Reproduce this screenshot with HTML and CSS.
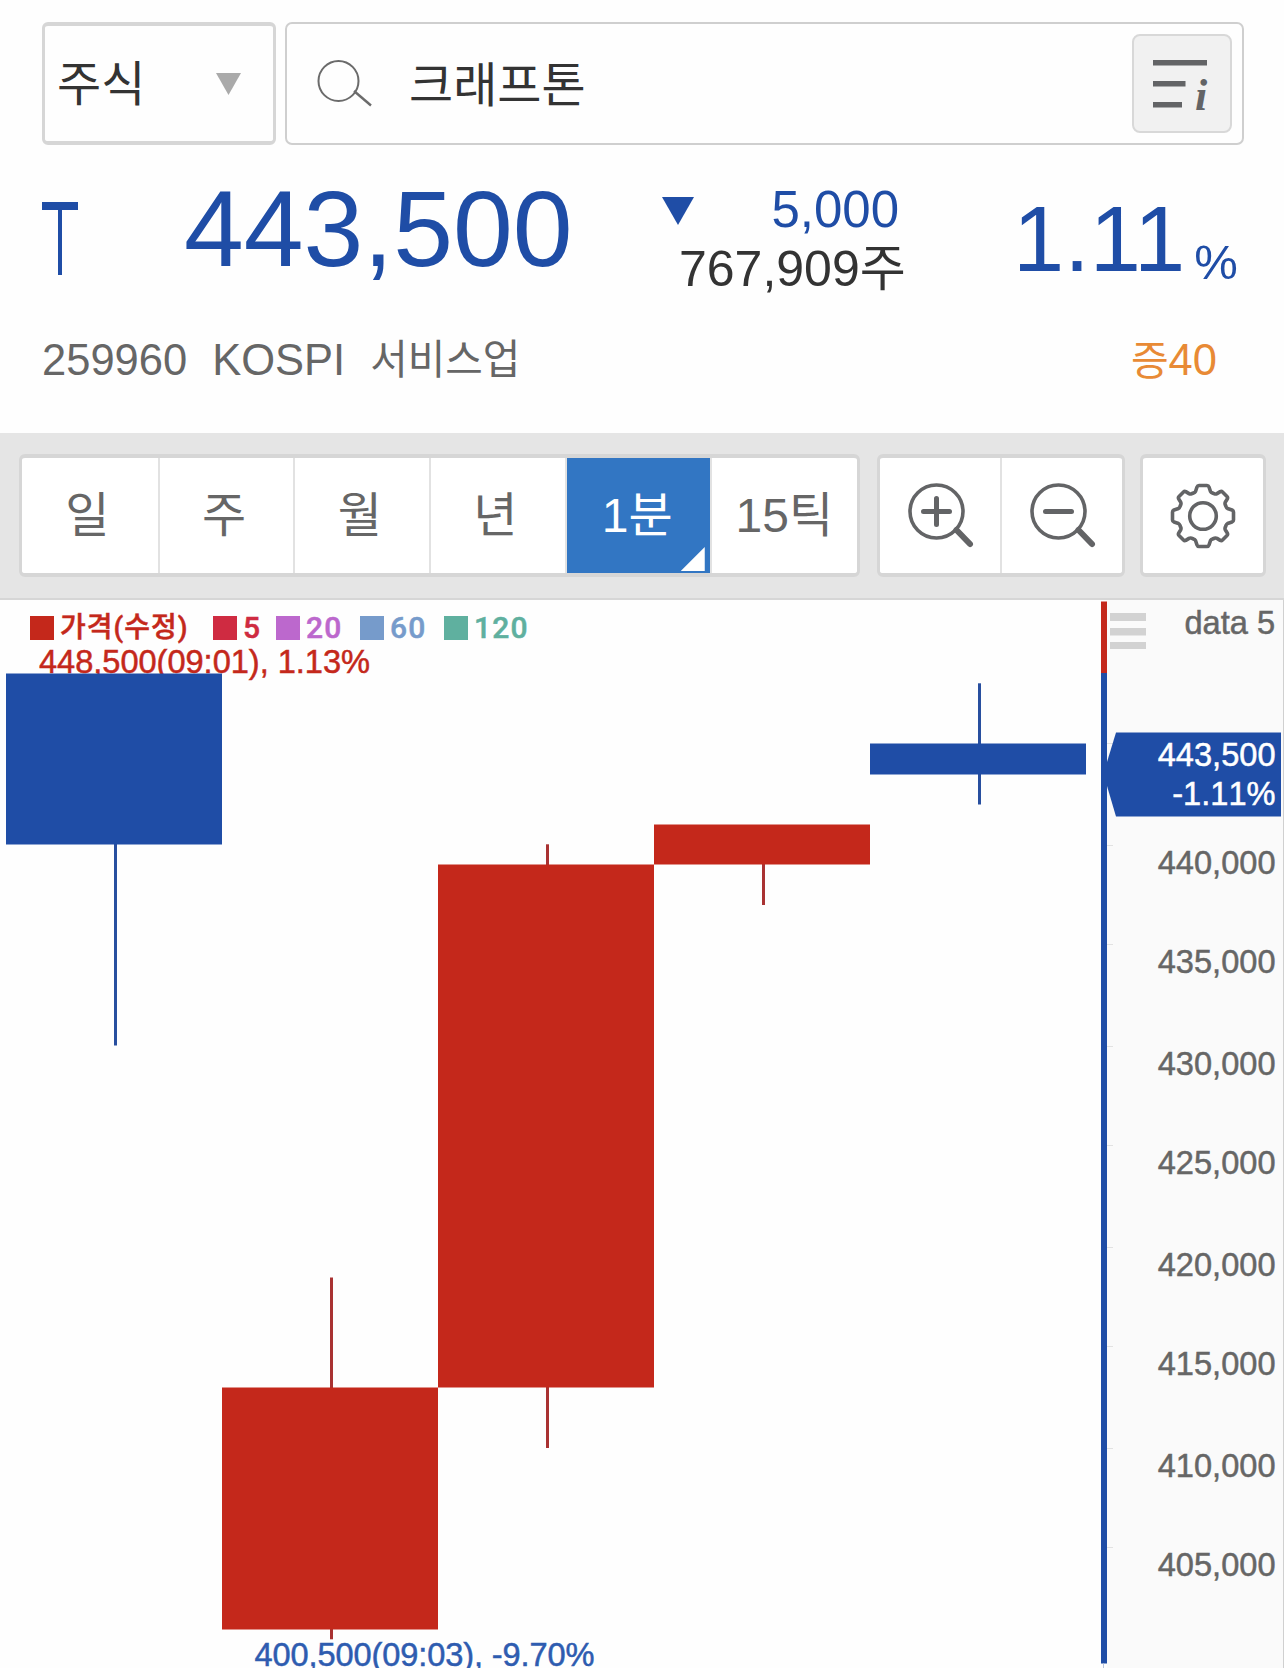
FILE: index.html
```html
<!DOCTYPE html>
<html lang="ko">
<head>
<meta charset="utf-8">
<title>크래프톤 443,500</title>
<link rel="stylesheet" href="styles.css">
</head>
<body>
<header class="header">
  <div class="search-row">
    <div class="select"><span>주식</span><svg width="25" height="22" viewBox="0 0 25 22"><path d="M0 0H25L12.5 22Z" fill="#aaa"/></svg></div>
    <div class="search">
      <svg class="search-icon" width="56" height="48" viewBox="0 0 56 48" fill="none" stroke="#6b6b6b" stroke-width="2"><circle cx="21.500" cy="21" r="20"/><path d="M37 31L54 45.500" stroke-width="2.400"/></svg>
      <span class="search-text">크래프톤</span>
      <div class="info-btn">
        <svg width="56" height="52" viewBox="0 0 56 52"><path d="M0 1H54V6.500H0ZM0 22H32.500V27.500H0ZM0 43H29V48.500H0Z" fill="#636466"/></svg>
        <span class="info-i">i</span>
      </div>
    </div>
  </div>
  <div class="quote">
    <svg class="limit" width="36" height="73" viewBox="0 0 36 73"><path d="M0 0H36V8H20V73H16V8H0Z" fill="#1f4da6"/></svg>
    <span class="price">443,500</span>
    <div class="change">
      <div class="diff"><svg width="32" height="28" viewBox="0 0 32 28"><path d="M0 0H32L16 28Z" fill="#1f4da6"/></svg><span>5,000</span></div>
      <div class="volume">767,909주</div>
    </div>
    <div class="rate"><span>1.11</span><span class="percent">%</span></div>
  </div>
  <div class="meta">
    <span class="code">259960</span><span class="market">KOSPI</span><span class="sector">서비스업</span><span class="margin"><span class="margin-label">증</span>40</span>
  </div>
</header>

<nav class="toolbar">
  <div class="group periods">
    <span class="cell">일</span><span class="cell">주</span><span class="cell">월</span><span class="cell">년</span><span class="cell active">1분<i class="corner"></i></span><span class="cell">15틱</span>
  </div>
  <div class="group zooms">
    <span class="cell"><svg width="70" height="70" viewBox="0 0 70 70" fill="none" stroke="#636466"><circle cx="29.500" cy="29.500" r="26.500" stroke-width="3.600"/><path d="M29.500 16.500V42.500M16.500 29.500H42.500" stroke-width="5" stroke-linecap="round"/><path d="M49.500 48L63 62" stroke-width="6" stroke-linecap="round"/></svg></span>
    <span class="cell"><svg width="70" height="70" viewBox="0 0 70 70" fill="none" stroke="#636466"><circle cx="29.500" cy="29.500" r="26.500" stroke-width="3.600"/><path d="M16.500 29.500H42.500" stroke-width="5" stroke-linecap="round"/><path d="M49.500 48L63 62" stroke-width="6" stroke-linecap="round"/></svg></span>
  </div>
  <div class="group settings">
    <span class="cell"><svg width="68" height="68" viewBox="-34 -34 68 68" fill="none" stroke="#636466" stroke-width="3.600" stroke-linejoin="round"><circle r="13.300"/><path d="M-4 -30.500H4Q5.500 -30.500 6 -29L7.500 -24.500Q8 -23.500 9.500 -23L11.500 -22.200Q12.800 -21.700 14 -22.400L17.200 -24.400Q18.500 -25 19.500 -24L24 -19.500Q25 -18.500 24.400 -17.200L22.400 -14Q21.700 -12.800 22.200 -11.500L23 -9.500Q23.500 -8 24.500 -7.500L29 -6Q30.500 -5.500 30.500 -4V4Q30.500 5.500 29 6L24.500 7.500Q23.500 8 23 9.500L22.200 11.500Q21.700 12.800 22.400 14L24.400 17.200Q25 18.500 24 19.500L19.500 24Q18.500 25 17.200 24.400L14 22.400Q12.800 21.700 11.500 22.200L9.500 23Q8 23.500 7.500 24.500L6 29Q5.500 30.500 4 30.500H-4Q-5.500 30.500 -6 29L-7.500 24.500Q-8 23.500 -9.500 23L-11.500 22.200Q-12.800 21.700 -14 22.400L-17.200 24.400Q-18.500 25 -19.500 24L-24 19.500Q-25 18.500 -24.400 17.200L-22.400 14Q-21.700 12.800 -22.200 11.500L-23 9.500Q-23.500 8 -24.500 7.500L-29 6Q-30.500 5.500 -30.500 4V-4Q-30.500 -5.500 -29 -6L-24.500 -7.500Q-23.500 -8 -23 -9.500L-22.200 -11.500Q-21.700 -12.800 -22.400 -14L-24.400 -17.200Q-25 -18.500 -24 -19.500L-19.500 -24Q-18.500 -25 -17.200 -24.400L-14 -22.400Q-12.800 -21.700 -11.500 -22.200L-9.500 -23Q-8 -23.500 -7.500 -24.500L-6 -29Q-5.500 -30.500 -4 -30.500Z"/></svg></span>
  </div>
</nav>

<main class="chart">
  <svg class="plot" width="1107" height="1068" viewBox="0 600 1107 1068">
    <text class="note down-note" x="39" y="673" textLength="331">448,500(09:01), 1.13%</text>
    <text class="note low-note" x="254.500" y="1666" textLength="340">400,500(09:03), -9.70%</text>
    <g fill="#284f9f">
      <rect x="114" y="844" width="3" height="201.500"/>
      <rect x="978" y="683.300" width="3" height="121.200"/>
    </g>
    <g fill="#a93232">
      <rect x="330" y="1277.500" width="3" height="361.800"/>
      <rect x="546" y="844.300" width="3" height="603.700"/>
      <rect x="762" y="864" width="3" height="41"/>
    </g>
    <g fill="#1f4da6">
      <rect x="6" y="673.500" width="216" height="171"/>
      <rect x="870" y="743.500" width="216" height="31"/>
      <rect x="1101" y="673" width="6" height="990.500"/>
    </g>
    <g fill="#c4281b">
      <rect x="222" y="1387.500" width="216" height="242"/>
      <rect x="438" y="864.500" width="216" height="523"/>
      <rect x="654" y="824.500" width="216" height="40"/>
      <rect x="1101" y="601.500" width="6" height="71.500"/>
    </g>
    <path d="M1103.500 1663.500V1668" stroke="#b9c4da"/>
  </svg>
  <svg class="axis" width="177" height="1068" viewBox="1107 600 177 1068">
    <path d="M1107 743.500h6M1107 845.500h6M1107 944.500h6M1107 1046.500h6M1107 1145.500h6M1107 1247.500h6M1107 1346.500h6M1107 1448.500h6M1107 1547.500h6" stroke="#e2e2e2"/>
    <path d="M1110 613h36v8h-36zM1110 628h36v7.500h-36zM1110 642h36v7h-36z" fill="#d2d2d2"/>
    <path d="M1116 732.500H1281V816.500H1116L1107 786V762Z" fill="#1f4da6"/>
    <g class="label">
      <text x="1275" y="634">data 5</text>
      <text x="1275.500" y="874">440,000</text><text x="1275.500" y="973">435,000</text><text x="1275.500" y="1075">430,000</text><text x="1275.500" y="1174">425,000</text><text x="1275.500" y="1276">420,000</text><text x="1275.500" y="1375">415,000</text><text x="1275.500" y="1477">410,000</text><text x="1275.500" y="1576">405,000</text>
    </g>
    <g class="label now"><text x="1275.500" y="766">443,500</text><text x="1275.500" y="805">-1.11%</text></g>
    <path d="M1283.500 600V1668" stroke="#d0d0d0"/>
  </svg>
  <div class="legend">
    <span class="key price-key">가격(수정)</span><span class="key ma5">5</span><span class="key ma20">20</span><span class="key ma60">60</span><span class="key ma120">120</span>
  </div>
</main>
</body>
</html>
```
FILE: styles.css
```css
* { box-sizing: border-box; }
body {
  margin: 0;
  width: 1284px;
  height: 1668px;
  overflow: hidden;
  background: #fefefe;
  font-family: "Liberation Sans", "Noto Sans CJK KR", sans-serif;
  color: #333;
}
svg { display: block; flex: none; }
.header { height: 433px; padding: 22px 40px 0 42px; }

.search-row { display: flex; gap: 9px; height: 123px; }
.select {
  display: flex;
  align-items: center;
  justify-content: space-between;
  width: 234px;
  padding: 3px 32px 0 12px;
  border: 3px solid #d6d6d6;
  border-width: 4px 3px;
  border-radius: 6px;
  font-size: 48px;
  line-height: 60px;
}
.select svg { margin-bottom: 2px; }
.search {
  display: flex;
  align-items: center;
  width: 959px;
  padding: 0 10px 0 30px;
  border: 2px solid #cfcfcf;
  border-radius: 7px;
}
.search-text { margin: 4px 0 0 36px; font-size: 48px; line-height: 60px; }
.info-btn {
  position: relative;
  display: flex;
  align-items: center;
  justify-content: center;
  width: 100px;
  height: 99px;
  margin: 0 0 0 auto;
  padding: 3px 2px 0 0;
  border: 2px solid #d8d8d8;
  border-radius: 8px;
  background: #f1f1f1;
}
.info-i {
  position: absolute;
  left: 61px;
  top: 38px;
  width: 20px;
  font: italic bold 44px/44px "Liberation Serif", serif;
  color: #636466;
}

.quote { display: flex; align-items: flex-start; height: 155px; padding-top: 30px; color: #1f4da6; }
.limit { margin-top: 27px; }
.price { width: 391px; margin-left: 106px; font-size: 107.500px; line-height: 108px; }
.change { width: 245px; margin: 7px 0 0 85px; }
.diff { display: flex; justify-content: space-between; width: 241px; padding-right: 2px; font-size: 51px; line-height: 56px; }
.diff svg { margin: 15px 0 0 2px; }
.volume { padding-left: 19px; margin-top: 1px; font-size: 50px; line-height: 60px; white-space: nowrap; color: #333; }
.rate { display: flex; margin: 18px 0 0 108px; font-size: 92px; line-height: 93px; }
.percent { margin: 44px 0 0 9px; font-size: 49px; line-height: 50px; }

.meta { display: flex; height: 60px; margin-top: 30px; padding-right: 27px; font-size: 43.500px; line-height: 60px; color: #666; }
.market { margin-left: 25px; }
.sector { margin-left: 25px; font-size: 40.800px; }
.margin { margin-left: auto; color: #e88a35; }
.margin-label { font-size: 41px; }

.toolbar {
  display: flex;
  height: 167px;
  padding: 21px 18px 0 19px;
  border-bottom: 2px solid #d6d6d6;
  background: #e5e5e5;
}
.group {
  display: flex;
  flex: none;
  height: 123px;
  border: 3px solid #d6d6d6;
  border-width: 4px 3px;
  border-radius: 6px;
  background: #fff;
}
.cell {
  position: relative;
  display: flex;
  flex: 1;
  align-items: center;
  justify-content: center;
  color: #666;
  font-size: 48px;
}
.cell + .cell { border-left: 2px solid #e2e2e2; }
.periods { width: 841px; margin-right: 17px; }
.periods .cell { flex: 0 0 135.700px; padding: 0 5px 9px 0; }
.periods .cell:last-child { flex: 1; padding-right: 0; }
.periods .active { flex: 0 0 145px; padding-right: 2px; background: #3276c3; background-clip: padding-box; color: #fff; }
.corner {
  position: absolute;
  right: 5px;
  bottom: 2px;
  width: 24px;
  height: 24px;
  background: #fff;
  clip-path: polygon(100% 0, 100% 100%, 0 100%);
}
.zooms { width: 248px; margin-right: 15px; }
.zooms svg { margin: 2px 0 0 3px; }
.settings { width: 126px; }

.chart { position: relative; display: flex; height: 1068px; }
.axis { background: #fafafa; }
.note { font-size: 32.600px; font-kerning: none; stroke-width: 0.500px; }
.down-note { fill: #c4281b; stroke: #c4281b; }
.low-note { fill: #2e5cb0; stroke: #2e5cb0; }
.label { font-size: 32.600px; fill: #666; stroke: #666; stroke-width: 0.500px; text-anchor: end; font-kerning: none; }
.now { fill: #fff; stroke: #fff; }
.legend {
  position: absolute;
  top: 13px;
  left: 30px;
  display: flex;
  height: 30px;
  font: 500 30px/30px Roboto, "Noto Sans CJK KR", sans-serif;
  letter-spacing: 1.200px;
  -webkit-text-stroke: 0.500px currentColor;
}
.key { display: flex; align-items: center; gap: 6px; white-space: nowrap; }
.key::before { content: ""; width: 24px; height: 24px; background: currentColor; }
.price-key { width: 183px; color: #c4281b; font-size: 28px; letter-spacing: 1px; }
.ma5 { width: 63px; color: #cf2b41; }
.ma20 { width: 84px; color: #bc68cd; }
.ma60 { width: 84px; color: #769bcb; }
.ma120 { color: #5fb09f; }
```
